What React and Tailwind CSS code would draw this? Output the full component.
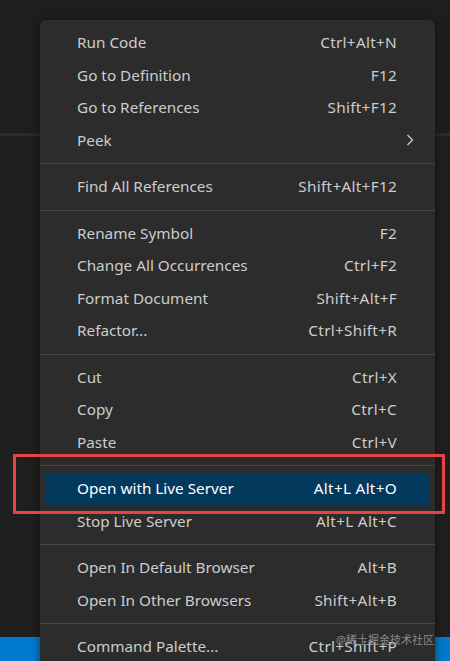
import React from "react";

const groups = [
  [
    { label: "Run Code", keys: "Ctrl+Alt+N" },
    { label: "Go to Definition", keys: "F12" },
    { label: "Go to References", keys: "Shift+F12" },
    { label: "Peek", sub: true },
  ],
  [{ label: "Find All References", keys: "Shift+Alt+F12" }],
  [
    { label: "Rename Symbol", keys: "F2" },
    { label: "Change All Occurrences", keys: "Ctrl+F2" },
    { label: "Format Document", keys: "Shift+Alt+F" },
    { label: "Refactor...", keys: "Ctrl+Shift+R" },
  ],
  [
    { label: "Cut", keys: "Ctrl+X" },
    { label: "Copy", keys: "Ctrl+C" },
    { label: "Paste", keys: "Ctrl+V" },
  ],
  [
    { label: "Open with Live Server", keys: "Alt+L Alt+O", active: true },
    { label: "Stop Live Server", keys: "Alt+L Alt+C" },
  ],
  [
    { label: "Open In Default Browser", keys: "Alt+B" },
    { label: "Open In Other Browsers", keys: "Shift+Alt+B" },
  ],
  [{ label: "Command Palette...", keys: "Ctrl+Shift+P" }],
];

function Row({ item }) {
  return (
    <div
      className={
        "mx-[5px] flex h-[32.5px] items-center justify-between rounded-[4px] pl-[32px] pr-[33px] " +
        (item.active ? "bg-[#04395e] text-white" : "text-[#cccccc]")
      }
    >
      <span>{item.label}</span>
      {item.sub ? (
        <svg width="10" height="14" viewBox="0 0 10 14" className="-mr-[18px]">
          <path d="M2.5 2 L7.5 7 L2.5 12" fill="none" stroke="#cccccc" strokeWidth="1.3" />
        </svg>
      ) : (
        <span className="tracking-[0.3px]">{item.keys}</span>
      )}
    </div>
  );
}

export default function App() {
  return (
    <div
      className="relative h-[661px] w-[450px] overflow-hidden bg-[#1e1e1e]"
      style={{ fontFamily: '"Noto Sans", "Noto Sans CJK SC", sans-serif' }}
    >
      {/* editor background */}
      <div className="h-[133px]" />
      <div className="h-[3px] bg-[#2a2a2a]" />
      <div className="h-[501px] bg-[#1f1f1f]" />
      <div className="h-[24px] bg-[#007acc]" />

      {/* context menu */}
      <div className="absolute left-[40px] top-[20px] w-[395px] rounded-t-[6px] bg-[#2c2c2c] pt-[6.5px] pb-4 text-[15.3px] shadow-[0_2px_8px_rgba(0,0,0,0.5)]">
        {groups.map((g, i) => (
          <div key={i}>
            {i > 0 && <div className="my-[6.5px] h-px bg-[#474747]" />}
            {g.map((item) => (
              <Row key={item.label} item={item} />
            ))}
          </div>
        ))}
      </div>

      {/* highlight annotation */}
      <div className="absolute left-[13px] top-[454px] h-[60px] w-[432px] border-[3px] border-[#e44444]" />

      <div className="absolute right-[16px] top-[632px] text-[11px] text-[#8a8a8a]">@稀土掘金技术社区</div>
    </div>
  );
}
